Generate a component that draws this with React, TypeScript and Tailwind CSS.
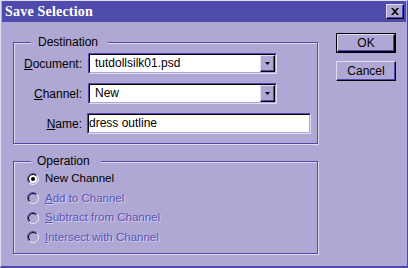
import React from "react";

function Radio({ checked, disabled, id }: { checked?: boolean; disabled?: boolean; id: string }) {
  return (
    <svg width="12" height="12" viewBox="0 0 12 12" className="shrink-0">
      <defs>
        <linearGradient id={`o${id}`} x1="0" y1="0" x2="1" y2="1">
          <stop offset="50%" stopColor="#4e4aad" />
          <stop offset="50%" stopColor="#eeebfa" />
        </linearGradient>
        <linearGradient id={`i${id}`} x1="0" y1="0" x2="1" y2="1">
          <stop offset="50%" stopColor="#000" />
          <stop offset="50%" stopColor="#b0a8d4" />
        </linearGradient>
      </defs>
      <circle cx="6" cy="6" r="4.5" fill={disabled ? "#b0a8d4" : "#fff"} />
      <circle cx="6" cy="6" r="5.5" fill="none" stroke={`url(#o${id})`} strokeWidth="1" />
      <circle cx="6" cy="6" r="4.5" fill="none" stroke={`url(#i${id})`} strokeWidth="1" />
      {checked && <circle cx="6" cy="6" r="2" fill="#000" />}
    </svg>
  );
}

function Combo({ value }: { value: string }) {
  return (
    <div className="h-[21px] w-[189px] border border-t-[#4e4aad] border-l-[#4e4aad] border-b-[#e0dcf4] border-r-[#e0dcf4]">
      <div className="flex h-full border border-t-black border-l-black border-b-[#b0a8d4] border-r-[#b0a8d4] bg-white">
        <div className="flex-1 pl-[5px] leading-[17px]">{value}</div>
        <div className="flex h-full w-[15px] items-center justify-center border border-t-[#e0dcf4] border-l-[#e0dcf4] border-b-black border-r-black bg-[#b0a8d4] shadow-[inset_-1px_-1px_0_#4e4aad]">
          <svg width="5" height="3" viewBox="0 0 5 3">
            <path d="M0 0h5l-2.5 3z" fill="#000" />
          </svg>
        </div>
      </div>
    </div>
  );
}

function Button({ label, isDefault }: { label: string; isDefault?: boolean }) {
  return (
    <div className={isDefault ? "h-[20px] w-[60px] border border-black" : "h-[20px] w-[60px]"}>
      <div className="flex h-full items-center justify-center border border-t-[#e0dcf4] border-l-[#e0dcf4] border-b-black border-r-black shadow-[inset_-1px_-1px_0_#4e4aad]">
        {label}
      </div>
    </div>
  );
}

const ops = [
  { key: "N", rest: "ew Channel", checked: true, disabled: false, ul: false },
  { key: "A", rest: "dd to Channel", checked: false, disabled: true, ul: true },
  { key: "S", rest: "ubtract from Channel", checked: false, disabled: true, ul: true },
  { key: "I", rest: "ntersect with Channel", checked: false, disabled: true, ul: true },
];

export default function App() {
  return (
    <div className="flex h-[268px] w-[408px] flex-col border-t border-l border-r border-b-2 border-t-[#e0dcf4] border-l-[#e0dcf4] border-r-[#4e4aad] border-b-[#4e4aad] bg-[#b0a8d4] px-px font-['Liberation_Sans',Arial,sans-serif] text-[12px] text-black">
      {/* title bar */}
      <div className="flex h-[21px] shrink-0 items-center justify-between bg-[#4f4bad] pl-[3px] pr-[2px]">
        <span className="font-['Liberation_Serif',serif] text-[14px] font-bold leading-none tracking-[0.2px] text-white">
          Save Selection
        </span>
        <div className="flex h-[15px] w-[18px] items-center justify-center border border-t-[#e0dcf4] border-l-[#e0dcf4] border-b-black border-r-black bg-[#b0a8d4] shadow-[inset_-1px_-1px_0_#4e4aad]">
          <svg width="8" height="7" viewBox="0 0 8 7">
            <path d="M0 0h2l2 2.3 2-2.3h2l-3 3.5 3 3.5h-2l-2-2.3-2 2.3h-2l3-3.5z" fill="#000" />
          </svg>
        </div>
      </div>

      <div className="flex flex-1 pl-[11px] pt-[11px]">
        <div className="mt-[2px] flex w-[305px] flex-col gap-[10px]">
          <fieldset className="m-0 border border-[#4e4aad] p-0 pb-[9px] shadow-[inset_1px_1px_0_#e0dcf4,1px_1px_0_#e0dcf4]">
            <legend className="ml-[17px] bg-[#b0a8d4] pl-[7px] pr-[10px] leading-[14px]">Destination</legend>
            <div className="flex flex-col gap-[9px] pt-[4px]">
              <div className="flex h-[21px] items-center">
                <label className="w-[68px] text-right">
                  <span className="underline">D</span>ocument:
                </label>
                <div className="ml-[6px]">
                  <Combo value="tutdollsilk01.psd" />
                </div>
              </div>
              <div className="flex h-[21px] items-center">
                <label className="w-[68px] text-right">
                  <span className="underline">C</span>hannel:
                </label>
                <div className="ml-[6px]">
                  <Combo value="New" />
                </div>
              </div>
              <div className="flex h-[21px] items-center">
                <label className="w-[68px] text-right">
                  <span className="underline">N</span>ame:
                </label>
                <div className="ml-[5px] h-[21px] w-[224px] border border-t-[#4e4aad] border-l-[#4e4aad] border-b-[#e0dcf4] border-r-[#e0dcf4]">
                  <div className="h-full border border-t-black border-l-black border-b-[#b0a8d4] border-r-[#b0a8d4] bg-white leading-[17px]">
                    dress outline
                  </div>
                </div>
              </div>
            </div>
          </fieldset>

          <fieldset className="m-0 border border-[#4e4aad] p-0 pb-[6px] shadow-[inset_1px_1px_0_#e0dcf4,1px_1px_0_#e0dcf4]">
            <legend className="ml-[17px] bg-[#b0a8d4] pl-[6px] pr-[11px] leading-[14px]">Operation</legend>
            <div className="flex flex-col pt-[1px] text-[11.5px]">
              {ops.map((o, i) => (
                <div key={o.key} className="flex h-[19.5px] items-center gap-[6px] pl-[13px]">
                  <Radio id={String(i)} checked={o.checked} disabled={o.disabled} />
                  <span
                    className={
                      o.disabled
                        ? "text-[#5854b6] [text-shadow:1px_1px_0_#d4d0ec]"
                        : "text-black"
                    }
                  >
                    <span className={o.ul ? "underline" : ""}>{o.key}</span>
                    {o.rest}
                  </span>
                </div>
              ))}
            </div>
          </fieldset>
        </div>

        <div className="ml-[18px] flex flex-col gap-[8px]">
          <Button label="OK" isDefault />
          <Button label="Cancel" />
        </div>
      </div>
    </div>
  );
}
